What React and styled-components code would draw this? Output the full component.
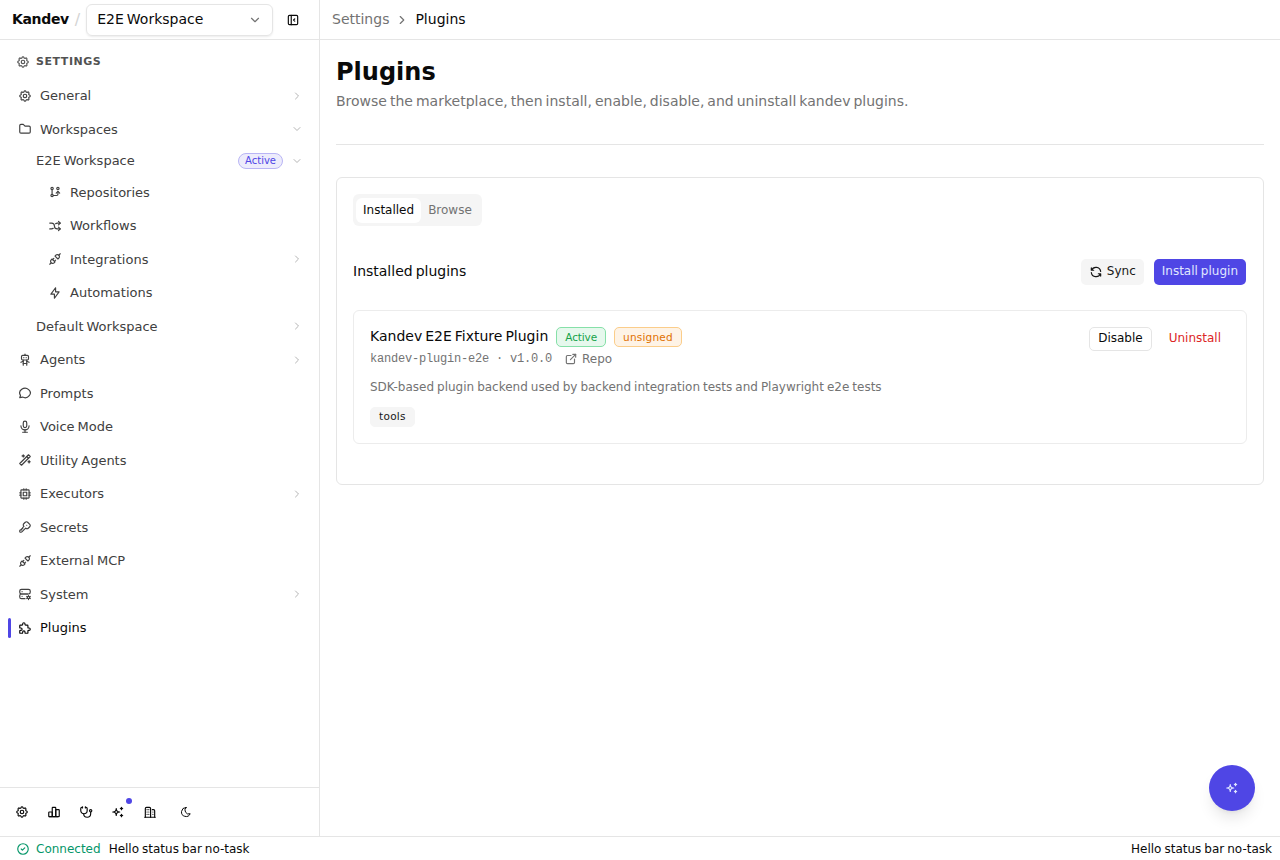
import React from "react";
import styled, { createGlobalStyle } from "styled-components";
import {
  TbArrowsShuffle,
  TbBolt,
  TbBuildings,
  TbChartBar,
  TbChevronDown,
  TbChevronRight,
  TbCircleCheck,
  TbCpu,
  TbExternalLink,
  TbFolder,
  TbGitBranch,
  TbKey,
  TbLayoutSidebarLeftCollapse,
  TbMessageCircle,
  TbMicrophone,
  TbMoon,
  TbPlugConnected,
  TbPuzzle,
  TbRefresh,
  TbRobot,
  TbServerCog,
  TbSettings,
  TbSparkles,
  TbStethoscope,
  TbWand,
} from "react-icons/tb";

const GlobalStyle = createGlobalStyle`
  *, *::before, *::after {
    box-sizing: border-box;
    word-spacing: calc(3px - 0.318em);
  }

  body {
    margin: 0;
    background: #fff;
    color: #0a0a0a;
    font-family: "DejaVu Sans", sans-serif;
    font-size: 14px;
    line-height: 20px;
  }

  h1, h2, h3, p {
    margin: 0;
  }

  button {
    font: inherit;
    color: inherit;
    border: 0;
    padding: 0;
    background: none;
  }

  svg {
    display: block;
    flex-shrink: 0;
  }
`;

const Page = styled.div`
  display: flex;
  flex-direction: column;
  height: 860px;
`;

const Body = styled.div`
  display: flex;
  flex: 1;
  min-height: 0;
`;

const Sidebar = styled.aside`
  display: flex;
  flex-direction: column;
  width: 320px;
  border-right: 1px solid #e5e5e5;
`;

const SidebarHeader = styled.header`
  display: flex;
  align-items: center;
  height: 40px;
  padding-left: 12px;
  border-bottom: 1px solid #e5e5e5;
`;

const Brand = styled.span`
  padding-bottom: 2px;
  font-weight: 700;
  letter-spacing: -0.35px;
`;

const Slash = styled.span`
  margin: 0 6px;
  color: #d4d4d4;
  font-size: 16px;
`;

const WorkspaceSelect = styled.button`
  display: flex;
  align-items: center;
  justify-content: space-between;
  width: 187px;
  height: 32px;
  padding: 0 10px;
  border: 1px solid #e5e5e5;
  border-radius: 6px;
  box-shadow: 0 1px 2px rgba(0, 0, 0, 0.08);

  svg {
    color: #737373;
  }
`;

const WorkspaceName = styled.span`
  padding-bottom: 2px;
`;

const CollapseButton = styled.button`
  margin-left: 13px;
`;

const SectionTitle = styled.h2`
  display: flex;
  align-items: center;
  gap: 6px;
  height: 40px;
  padding: 4px 0 0 16px;
  color: #525252;
  font-size: 11px;
  font-weight: 700;
  letter-spacing: 0.55px;
`;

const Nav = styled.nav`
  display: flex;
  flex: 1;
  flex-direction: column;
  gap: 2px;
  padding: 0 8px;
`;

const NavRow = styled.a`
  display: flex;
  align-items: center;
  gap: 8px;
  height: ${(props) => (props.$compact ? "27.7px" : "31.5px")};
  padding-left: ${(props) => [10, 28, 40][props.$level]}px;
  padding-right: 8px;
  color: ${(props) => (props.$active ? "#0a0a0a" : "#404040")};
  font-size: 13px;
  line-height: 19.5px;
  position: relative;

  &::before {
    content: "";
    display: ${(props) => (props.$active ? "block" : "none")};
    position: absolute;
    left: 0;
    top: 5.5px;
    width: 3px;
    height: 20px;
    border-radius: 2px;
    background: #4f46e5;
  }
`;

const NavLabel = styled.span`
  flex: 1;
`;

const Chevron = styled.span`
  color: #b5b5b5;
`;

const ActivePill = styled.span`
  padding: 0 6px;
  border: 1px solid #b9b5f5;
  border-radius: 8px;
  background: #edecfc;
  color: #4f46e5;
  font-size: 10px;
  line-height: 14px;
`;

const SidebarFooter = styled.footer`
  display: flex;
  align-items: center;
  gap: 18px;
  height: 49px;
  padding-left: 15px;
  border-top: 1px solid #e5e5e5;
`;

const FooterButton = styled.button`
  position: relative;
  margin-left: ${(props) => (props.$spaced ? "5px" : 0)};
`;

const Dot = styled.span`
  position: absolute;
  top: -7px;
  right: -7px;
  width: 6px;
  height: 6px;
  border-radius: 50%;
  background: #4f46e5;
`;

const Main = styled.main`
  flex: 1;
`;

const Breadcrumb = styled.div`
  display: flex;
  align-items: center;
  gap: 6px;
  height: 40px;
  padding: 0 12px 1px;
  border-bottom: 1px solid #e5e5e5;
  color: #737373;

  svg {
    margin-top: 2px;
  }
`;

const Current = styled.span`
  color: #0a0a0a;
`;

const Content = styled.div`
  padding: 16px;
`;

const Title = styled.h1`
  font-size: 24px;
  font-weight: 700;
  line-height: 32px;
`;

const Subtitle = styled.p`
  margin-top: 3px;
  padding-bottom: 33px;
  border-bottom: 1px solid #e5e5e5;
  color: #737373;
`;

const Panel = styled.section`
  height: 308px;
  margin-top: 32px;
  padding: 16px;
  border: 1px solid #e5e5e5;
  border-radius: 6px;
`;

const Tabs = styled.div`
  display: flex;
  height: 32px;
  width: 129px;
  padding: 4px 3px 3px;
  border-radius: 6px;
  background: #f5f5f5;
`;

const Tab = styled.button`
  padding: 0 7px 1px;
  border-radius: 6px;
  background: ${(props) => (props.$active ? "#fff" : "transparent")};
  color: ${(props) => (props.$active ? "#0a0a0a" : "#737373")};
  font-size: 12px;
`;

const Toolbar = styled.div`
  display: flex;
  align-items: center;
  gap: 10px;
  height: 26px;
  margin-top: 33px;
  padding-right: 1px;
`;

const ToolbarTitle = styled.h3`
  flex: 1;
  padding-bottom: 2px;
  font-size: 14px;
  font-weight: 400;
`;

const variants = {
  secondary: "background: #f5f5f5; color: #171717;",
  primary: "background: #4f46e5; color: #e0e7ff;",
  outline: "border: 1px solid #e5e5e5;",
  danger: "color: #dc2626;",
};

const Button = styled.button`
  display: flex;
  align-items: center;
  gap: 4px;
  height: ${(props) => props.$height || 26}px;
  padding: 0 8px 2px;
  border-radius: 5px;
  font-size: 12px;
  ${(props) => variants[props.$variant]}

  svg {
    margin-top: 2px;
  }
`;

const PluginCard = styled.article`
  display: flex;
  align-items: flex-start;
  justify-content: space-between;
  height: 134px;
  margin-top: 25px;
  padding: 16px;
  border: 1px solid #ececec;
  border-radius: 6px;
`;

const PluginHeading = styled.div`
  display: flex;
  align-items: center;
  gap: 8px;
`;

const PluginName = styled.h3`
  padding-bottom: 2px;
  font-size: 14px;
  font-weight: 400;
  line-height: 18px;
`;

const badges = {
  green: `
    border-color: #86e0a8;
    background: #e6f8ed;
    color: #16a34a;
    letter-spacing: -0.12px;
  `,
  orange: `
    border-color: #fbcd8a;
    background: #fef3e6;
    color: #e17100;
    letter-spacing: 0.22px;
  `,
  gray: `
    padding-bottom: 1px;
    border-color: #f5f5f5;
    background: #f5f5f5;
    color: #171717;
    letter-spacing: 0.3px;
    line-height: 17px;
  `,
};

const Badge = styled.span`
  display: inline-block;
  padding: 0 8px;
  border: 1px solid;
  border-radius: 5px;
  font-size: 10.5px;
  line-height: 18px;
  ${(props) => badges[props.$tone]}
`;

const Meta = styled.div`
  display: flex;
  align-items: center;
  margin-top: 4px;
  color: #737373;
  font-size: 12px;
  line-height: 16px;
`;

const PluginId = styled.span`
  font-family: "Liberation Mono", monospace;
  letter-spacing: -0.2px;
  word-spacing: 0;
`;

const RepoLink = styled.a`
  display: flex;
  align-items: center;
  gap: 4px;
  margin-left: 12px;
`;

const Description = styled.p`
  margin: 10px 0;
  color: #737373;
  font-size: 12px;
`;

const Tags = styled.div`
  display: flex;
`;

const Actions = styled.div`
  display: flex;
  gap: 9px;
  padding-right: 1px;
`;

const StatusBar = styled.footer`
  display: flex;
  align-items: center;
  height: 24px;
  padding: 0 8px 0 16px;
  border-top: 1px solid #e5e5e5;
  font-size: 12px;
`;

const Connection = styled.span`
  display: flex;
  align-items: center;
  gap: 6px;
  margin-right: 8px;
  color: #059669;
`;

const StatusRight = styled.span`
  margin-left: auto;
`;

const Fab = styled.button`
  position: fixed;
  right: 25px;
  bottom: 49px;
  display: flex;
  align-items: center;
  justify-content: center;
  width: 46px;
  height: 46px;
  border-radius: 50%;
  background: #4f46e5;
  color: #e0e7ff;
  box-shadow: 0 10px 15px -3px rgba(0, 0, 0, 0.1), 0 4px 6px -4px rgba(0, 0, 0, 0.1);
`;

const items = [
  { label: "General", icon: TbSettings, chevron: "right" },
  { label: "Workspaces", icon: TbFolder, chevron: "down" },
  { label: "E2E Workspace", level: 1, chevron: "down", pill: "Active" },
  { label: "Repositories", level: 2, icon: TbGitBranch },
  { label: "Workflows", level: 2, icon: TbArrowsShuffle },
  { label: "Integrations", level: 2, icon: TbPlugConnected, chevron: "right" },
  { label: "Automations", level: 2, icon: TbBolt },
  { label: "Default Workspace", level: 1, chevron: "right" },
  { label: "Agents", icon: TbRobot, chevron: "right" },
  { label: "Prompts", icon: TbMessageCircle },
  { label: "Voice Mode", icon: TbMicrophone },
  { label: "Utility Agents", icon: TbWand },
  { label: "Executors", icon: TbCpu, chevron: "right" },
  { label: "Secrets", icon: TbKey },
  { label: "External MCP", icon: TbPlugConnected },
  { label: "System", icon: TbServerCog, chevron: "right" },
  { label: "Plugins", icon: TbPuzzle, active: true },
];

const NavItem = ({ item }) => {
  const Icon = item.icon;
  const Arrow = item.chevron === "down" ? TbChevronDown : TbChevronRight;

  return (
    <NavRow $level={item.level || 0} $compact={!!item.pill} $active={item.active}>
      {Icon && <Icon size={14} />}
      <NavLabel>{item.label}</NavLabel>
      {item.pill && <ActivePill>{item.pill}</ActivePill>}
      {item.chevron && (
        <Chevron>
          <Arrow size={12} />
        </Chevron>
      )}
    </NavRow>
  );
};

const App = () => (
  <Page>
    <GlobalStyle />
    <Body>
      <Sidebar>
        <SidebarHeader>
          <Brand>Kandev</Brand>
          <Slash>/</Slash>
          <WorkspaceSelect>
            <WorkspaceName>E2E Workspace</WorkspaceName>
            <TbChevronDown size={14} />
          </WorkspaceSelect>
          <CollapseButton>
            <TbLayoutSidebarLeftCollapse size={14} />
          </CollapseButton>
        </SidebarHeader>
        <SectionTitle>
          <TbSettings size={14} />
          SETTINGS
        </SectionTitle>
        <Nav>
          {items.map((item) => (
            <NavItem key={item.label} item={item} />
          ))}
        </Nav>
        <SidebarFooter>
          <FooterButton>
            <TbSettings size={14} />
          </FooterButton>
          <FooterButton>
            <TbChartBar size={14} />
          </FooterButton>
          <FooterButton>
            <TbStethoscope size={14} />
          </FooterButton>
          <FooterButton>
            <TbSparkles size={14} />
            <Dot />
          </FooterButton>
          <FooterButton>
            <TbBuildings size={14} />
          </FooterButton>
          <FooterButton $spaced>
            <TbMoon size={12} />
          </FooterButton>
        </SidebarFooter>
      </Sidebar>
      <Main>
        <Breadcrumb>
          Settings
          <TbChevronRight size={14} />
          <Current>Plugins</Current>
        </Breadcrumb>
        <Content>
          <Title>Plugins</Title>
          <Subtitle>
            Browse the marketplace, then install, enable, disable, and uninstall
            kandev plugins.
          </Subtitle>
          <Panel>
            <Tabs>
              <Tab $active>Installed</Tab>
              <Tab>Browse</Tab>
            </Tabs>
            <Toolbar>
              <ToolbarTitle>Installed plugins</ToolbarTitle>
              <Button $variant="secondary">
                <TbRefresh size={14} />
                Sync
              </Button>
              <Button $variant="primary">Install plugin</Button>
            </Toolbar>
            <PluginCard>
              <div>
                <PluginHeading>
                  <PluginName>Kandev E2E Fixture Plugin</PluginName>
                  <Badge $tone="green">Active</Badge>
                  <Badge $tone="orange">unsigned</Badge>
                </PluginHeading>
                <Meta>
                  <PluginId>kandev-plugin-e2e · v1.0.0</PluginId>
                  <RepoLink>
                    <TbExternalLink size={14} />
                    Repo
                  </RepoLink>
                </Meta>
                <Description>
                  SDK-based plugin backend used by backend integration tests and
                  Playwright e2e tests
                </Description>
                <Tags>
                  <Badge $tone="gray">tools</Badge>
                </Tags>
              </div>
              <Actions>
                <Button $variant="outline" $height={24}>
                  Disable
                </Button>
                <Button $variant="danger" $height={24}>
                  Uninstall
                </Button>
              </Actions>
            </PluginCard>
          </Panel>
        </Content>
      </Main>
    </Body>
    <StatusBar>
      <Connection>
        <TbCircleCheck size={14} />
        Connected
      </Connection>
      Hello status bar no-task
      <StatusRight>Hello status bar no-task</StatusRight>
    </StatusBar>
    <Fab>
      <TbSparkles size={14} />
    </Fab>
  </Page>
);

export default App;
